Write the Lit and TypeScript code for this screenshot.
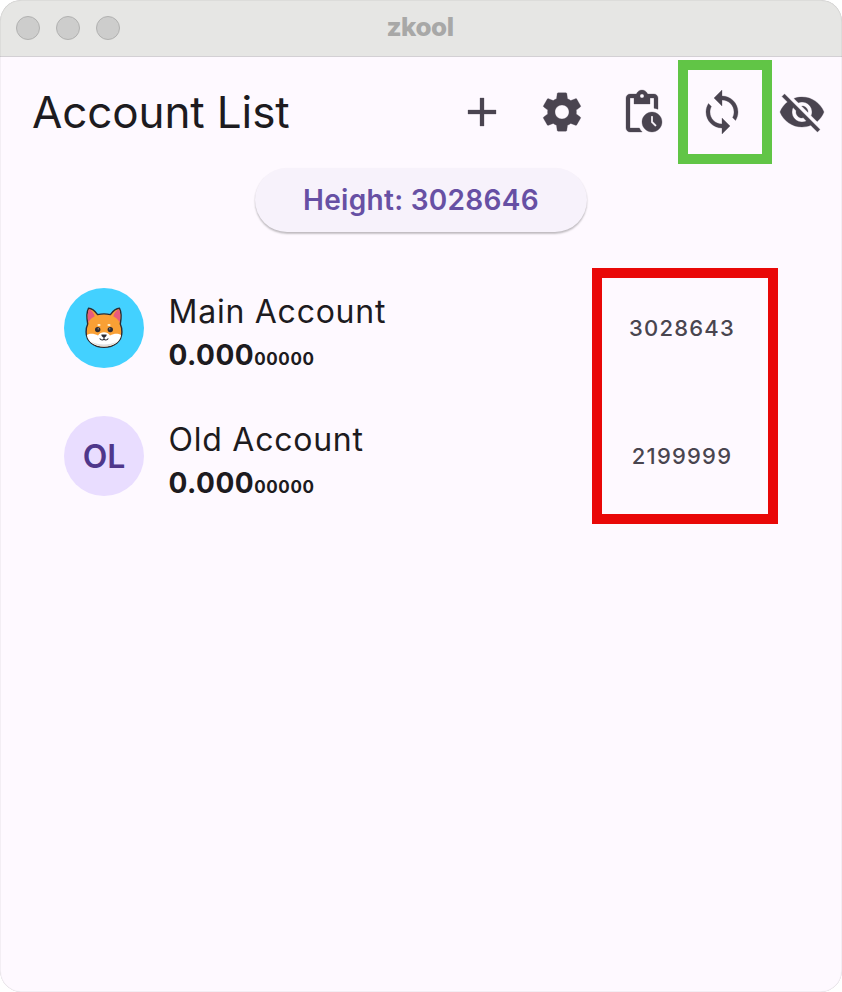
import { LitElement, html, css, svg } from "lit";
import { customElement } from "lit/decorators.js";

const ICONS = {
  add: "M19 13h-6v6h-2v-6H5v-2h6V5h2v6h6v2z",
  settings:
    "M19.14 12.94c.04-.3.06-.61.06-.94 0-.32-.02-.64-.07-.94l2.03-1.58c.18-.14.23-.41.12-.61l-1.92-3.32c-.12-.22-.37-.29-.59-.22l-2.39.96c-.5-.38-1.03-.7-1.62-.94l-.36-2.54c-.04-.24-.24-.41-.48-.41h-3.84c-.24 0-.43.17-.47.41l-.36 2.54c-.59.24-1.13.57-1.62.94l-2.39-.96c-.22-.08-.47 0-.59.22L2.74 8.87c-.12.21-.08.47.12.61l2.03 1.58c-.05.3-.09.63-.09.94s.02.64.07.94l-2.03 1.58c-.18.14-.23.41-.12.61l1.92 3.32c.12.22.37.29.59.22l2.39-.96c.5.38 1.03.7 1.62.94l.36 2.54c.05.24.24.41.48.41h3.84c.24 0 .44-.17.47-.41l.36-2.54c.59-.24 1.13-.56 1.62-.94l2.39.96c.22.08.47 0 .59-.22l1.92-3.32c.12-.22.07-.47-.12-.61l-2.01-1.58zM12 15.5c-1.930 0-3.500-1.570-3.500-3.500s1.570-3.500 3.500-3.500 3.500 1.570 3.500 3.500-1.570 3.500-3.500 3.500z",
  pending:
    "M17 12c-2.76 0-5 2.24-5 5s2.24 5 5 5 5-2.24 5-5-2.24-5-5-5zm1.65 7.35L16.5 17.2V14h1v2.79l1.85 1.85-.7.71zM18 3h-3.18C14.4 1.84 13.3 1 12 1s-2.4.84-2.82 2H6c-1.1 0-2 .9-2 2v15c0 1.1.9 2 2 2h6.11c-.59-.57-1.07-1.25-1.42-2H6V5h2v3h8V5h2v5.08c.71.1 1.38.31 2 .6V5c0-1.1-.9-2-2-2zm-6 2c-.55 0-1-.45-1-1s.45-1 1-1 1 .45 1 1-.45 1-1 1z",
  sync: "M12 4V1L8 5l4 4V6c3.31 0 6 2.69 6 6 0 1.01-.25 1.97-.7 2.8l1.46 1.46C19.54 15.03 20 13.57 20 12c0-4.42-3.58-8-8-8zm0 14c-3.31 0-6-2.69-6-6 0-1.01.25-1.97.7-2.8L5.24 7.74C4.46 8.97 4 10.43 4 12c0 4.42 3.58 8 8 8v3l4-4-4-4v3z",
  hidden:
    "M12 7c2.76 0 5 2.24 5 5 0 .65-.13 1.26-.36 1.83l2.92 2.92c1.51-1.26 2.7-2.89 3.43-4.75-1.73-4.39-6-7.5-11-7.5-1.4 0-2.74.25-3.98.7l2.16 2.16C10.74 7.13 11.35 7 12 7zM2 4.27l2.28 2.28.46.46C3.08 8.3 1.78 10.02 1 12c1.73 4.39 6 7.5 11 7.5 1.55 0 3.03-.3 4.38-.84l.42.42L19.73 22 21 20.73 3.27 3 2 4.27zM7.53 9.8l1.55 1.55c-.05.21-.08.43-.08.65 0 1.66 1.34 3 3 3 .22 0 .44-.03.65-.08l1.55 1.55c-.67.33-1.41.53-2.2.53-2.76 0-5-2.24-5-5 0-.79.2-1.53.53-2.2zm4.31-.78l3.15 3.15.02-.16c0-1.66-1.34-3-3-3l-.17.01z",
};

const icon = (name: keyof typeof ICONS) =>
  html`<svg class="icon" viewBox="0 0 24 24"><path d=${ICONS[name]} /></svg>`;

const shiba = svg`
  <path d="M3.600 1.200C7 1.200 10.500 4.600 12.600 7.600C16.500 6.700 21.500 6.700 25.400 7.600C27.500 4.600 31 1.200 34.400 1.200C36.200 4.500 36.400 11 35.300 17C36.500 19.500 36.900 22 36.900 25C36.900 34.500 29 40.300 19 40.300S1.100 34.500 1.100 25C1.100 22 1.500 19.500 2.700 17C1.600 11 1.800 4.500 3.600 1.200Z" fill="#f9a035" stroke="#2b2b33" stroke-width="1.400" stroke-linejoin="round"/>
  <path d="M3.300 15.200C2.300 10 2.600 5 4 2.300C7 3.400 9 6.200 9.700 9.300C7 10.700 4.800 12.800 3.300 15.200Z" fill="#e95b7c"/>
  <path d="M34.700 15.200C35.700 10 35.400 5 34 2.300C31 3.400 29 6.200 28.300 9.300C31 10.700 33.200 12.800 34.700 15.200Z" fill="#e95b7c"/>
  <path d="M1.900 28C5 26 9.500 26.600 13 28.500C14.500 26 16.500 25.200 19 25.200S23.500 26 25 28.500C28.500 26.600 33 26 36.100 28C35 35.500 28 39.500 19 39.500S3 35.500 1.900 28Z" fill="#fff"/>
  <path d="M6 34.500C13 38.500 25 38.500 32 34.500C28 38 24 39.500 19 39.500S10 38 6 34.500Z" fill="#dededf"/>
  <ellipse cx="14" cy="18" rx="1.600" ry="1.100" fill="#fff2d4"/>
  <ellipse cx="24" cy="18" rx="1.600" ry="1.100" fill="#fff2d4"/>
  <circle cx="12.700" cy="22.600" r="2.700" fill="#2b2b33"/>
  <circle cx="25.300" cy="22.600" r="2.700" fill="#2b2b33"/>
  <circle cx="13.200" cy="21.800" r=".6" fill="#c9c9cc"/>
  <circle cx="24.800" cy="21.800" r=".6" fill="#c9c9cc"/>
  <path d="M16.400 27.600h5.200c.3 1.600-1.200 3-2.600 3s-2.900-1.400-2.600-3z" fill="#2b2b33"/>
  <path d="M19 29.800v2M15 31.800c.9 1.500 3.200 1.500 4 .2c.8 1.300 3.100 1.300 4-.2" fill="none" stroke="#2b2b33" stroke-width="1.100" stroke-linecap="round"/>
`;

interface Account {
  name: string;
  initials?: string;
  major: string;
  minor: string;
  height: string;
}

const ACCOUNTS: Account[] = [
  { name: "Main Account", major: "0.000", minor: "00000", height: "3028643" },
  { name: "Old Account", initials: "OL", major: "0.000", minor: "00000", height: "2199999" },
];

@customElement("app-root")
export class AppRoot extends LitElement {
  static styles = css`
    :host {
      display: block;
      background: #fff;
      font-family: Inter, "Liberation Sans", sans-serif;
    }
    .window {
      position: relative;
      box-sizing: border-box;
      height: 992px;
      overflow: hidden;
      border-radius: 21px;
      background: #fef9ff;
      color: #1d1b20;
    }
    .window::after {
      content: "";
      position: absolute;
      inset: 0;
      border-radius: inherit;
      box-shadow: inset 0 0 1px rgba(0, 0, 0, 0.45);
      pointer-events: none;
    }
    .titlebar {
      display: grid;
      grid-template-columns: 1fr auto 1fr;
      align-items: center;
      box-sizing: border-box;
      height: 57px;
      padding: 0 16px 1px;
      border-bottom: 1px solid #d3d0d4;
      background: #e6e6e4;
    }
    .lights {
      display: flex;
      gap: 16px;
    }
    .light {
      box-sizing: border-box;
      width: 24px;
      height: 24px;
      border: 1px solid #b1b1b0;
      border-radius: 50%;
      background: #cdcdcc;
    }
    .app-name {
      padding: 0 2px 2px 0;
      font-size: 26px;
      font-weight: 800;
      line-height: 32px;
      letter-spacing: -0.45px;
      color: #a8a8a7;
    }
    .appbar {
      display: flex;
      align-items: center;
      justify-content: space-between;
      height: 109px;
      margin-bottom: 2px;
      padding-left: 32px;
    }
    .heading {
      margin: 0;
      font-size: 44px;
      font-weight: 420;
      line-height: 56px;
      letter-spacing: -0.12px;
    }
    .actions {
      display: flex;
    }
    .action {
      display: grid;
      place-items: center;
      width: 80px;
      height: 80px;
    }
    .action .icon {
      width: 48px;
      height: 48px;
      fill: #4a4450;
      stroke: #4a4450;
      stroke-width: 0.15;
    }
    .sync {
      position: relative;
    }
    .sync::after {
      content: "";
      position: absolute;
      box-sizing: border-box;
      left: -4px;
      top: -12px;
      width: 94px;
      height: 104px;
      border: 10px solid #61c546;
    }
    .height {
      display: grid;
      place-items: center;
      width: 332px;
      height: 64px;
      margin: 0 auto;
      border-radius: 32px;
      background: #f7f2fb;
      box-shadow: 0 2px 2px rgba(0, 0, 0, 0.2), 0 1px 2px rgba(0, 0, 0, 0.08);
      font-size: 28px;
      font-weight: 600;
      letter-spacing: 0.3px;
      color: #6750a4;
    }
    .list {
      display: flex;
      flex-direction: column;
      padding: 32px 64px 0;
      position: relative;
    }
    .list::after {
      content: "";
      position: absolute;
      box-sizing: border-box;
      left: 592px;
      top: 36px;
      width: 186px;
      height: 256px;
      border: 10px solid #e90808;
    }
    .row {
      display: flex;
      align-items: center;
      height: 128px;
    }
    .avatar {
      display: grid;
      place-items: center;
      flex: none;
      width: 80px;
      height: 80px;
      border-radius: 50%;
      background: #e9ddff;
      color: #4f378b;
      font-size: 32px;
      font-weight: 600;
    }
    .avatar.picture {
      background: #43d1ff;
    }
    .avatar svg {
      width: 38px;
      height: 42px;
    }
    .info {
      flex: 1;
      padding: 12px 0 0 24.5px;
    }
    .name {
      font-size: 32px;
      font-weight: 420;
      line-height: 46px;
      letter-spacing: 0.75px;
    }
    .balance {
      font-size: 28px;
      font-weight: 700;
      line-height: 40px;
      letter-spacing: 0.5px;
      white-space: nowrap;
    }
    .minor {
      font-size: 17px;
      font-weight: 700;
      letter-spacing: 0.6px;
    }
    .synced {
      width: 192px;
      text-align: center;
      font-size: 22px;
      font-weight: 550;
      letter-spacing: 1.2px;
      color: #49454f;
    }
  `;

  render() {
    return html`
      <div class="window">
        <div class="titlebar">
          <div class="lights">
            <span class="light"></span><span class="light"></span><span class="light"></span>
          </div>
          <div class="app-name">zkool</div>
        </div>
        <header class="appbar">
          <h1 class="heading">Account List</h1>
          <div class="actions">
            <div class="action">${icon("add")}</div>
            <div class="action">${icon("settings")}</div>
            <div class="action">${icon("pending")}</div>
            <div class="action sync">${icon("sync")}</div>
            <div class="action">${icon("hidden")}</div>
          </div>
        </header>
        <div class="height">Height: 3028646</div>
        <div class="list">
          ${ACCOUNTS.map(
            (a) => html`
              <div class="row">
                ${a.initials
                  ? html`<div class="avatar">${a.initials}</div>`
                  : html`<div class="avatar picture"><svg viewBox="0 0 38 42">${shiba}</svg></div>`}
                <div class="info">
                  <div class="name">${a.name}</div>
                  <div class="balance">${a.major}<span class="minor">${a.minor}</span></div>
                </div>
                <div class="synced">${a.height}</div>
              </div>
            `
          )}
        </div>
      </div>
    `;
  }
}
